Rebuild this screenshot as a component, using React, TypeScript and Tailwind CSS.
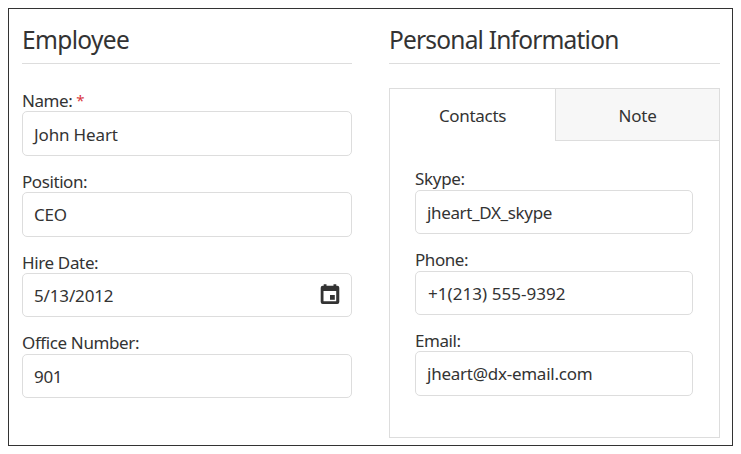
type FieldProps = {
  label: string;
  value: string;
  labelClass: string;
  valueClass: string;
  boxClass: string;
  required?: boolean;
  calendar?: boolean;
};

function CalendarIcon() {
  return (
    <svg className="mr-[11px] mb-0.5 ml-auto h-5 w-5 text-[#333]" viewBox="0 0 20 20" fill="currentColor">
      <path
        fillRule="evenodd"
        d="M3.700 0.300h2.800v1.500h7V0.300h2.800v1.500h1a2 2 0 0 1 2 2V18a2 2 0 0 1-2 2H2.700a2 2 0 0 1-2-2V3.800a2 2 0 0 1 2-2h1zM3.500 7v10.300h12.700V7z"
      />
      <path d="M10 11h4.800v4.800H10z" />
    </svg>
  );
}

function Field({ label, value, labelClass, valueClass, boxClass, required, calendar }: FieldProps) {
  return (
    <div className="flex flex-col text-[17px] leading-[22px]">
      <label className={`flex h-[22px] items-center whitespace-nowrap ${labelClass}`}>
        {label}
        {required && <span className="ml-1 pb-[3px] text-[15px] text-[#d9363e]">*</span>}
      </label>
      <div className={`flex items-center rounded-[5px] border border-[#ddd] pl-[11px] ${boxClass}`}>
        <span className={`whitespace-nowrap ${valueClass}`}>{value}</span>
        {calendar && <CalendarIcon />}
      </div>
    </div>
  );
}

export default function App() {
  return (
    <div className="h-[454px] w-[741px] bg-white p-2 font-['Noto_Sans',sans-serif] text-[#333]">
      <div className="flex h-[438px] w-[725px] gap-[37px] border border-[#333] pl-[13px]">
        <section className="flex w-[330px] flex-col">
          <h2 className="flex h-[55px] items-center border-b border-[#ddd] pt-[9px] text-[24.5px] tracking-[-0.65px]">Employee</h2>
          <div className="flex flex-col pt-[25px]">
            <Field label="Name:" value="John Heart" labelClass="pt-[2px] tracking-[-0.45px]" valueClass="pt-[2px] tracking-[-0.15px]" boxClass="h-[45px]" required />
            <div className="h-[14px]" />
            <Field label="Position:" value="CEO" labelClass="pt-[2px] tracking-[-0.42px]" valueClass="tracking-[-0.2px]" boxClass="h-[45px]" />
            <div className="h-[14px]" />
            <Field label="Hire Date:" value="5/13/2012" labelClass="pt-[2px] tracking-[-0.36px]" valueClass="pt-[2px] tracking-[-0.15px]" boxClass="h-[44px]" calendar />
            <div className="h-[15px]" />
            <Field label="Office Number:" value="901" labelClass="tracking-[-0.38px]" valueClass="pt-[2px] tracking-[-0.3px]" boxClass="h-[44px]" />
          </div>
        </section>

        <section className="flex w-[331px] flex-col">
          <h2 className="flex h-[55px] items-center border-b border-[#ddd] pt-[9px] text-[24.5px] tracking-[-0.8px]">Personal Information</h2>
          <div className="mt-6 flex h-[350px] flex-col border border-[#ddd]">
            <div className="flex h-[52px] text-[17px]">
              <div className="flex w-[165px] items-center justify-center pt-[2px] tracking-[-0.3px]">Contacts</div>
              <div className="flex flex-1 items-center justify-center border-b border-l border-[#ddd] bg-[#f7f7f7] pt-[2px] tracking-[-0.2px]">Note</div>
            </div>
            <div className="flex flex-col px-[25px] pt-[27px]">
              <div className="w-[278px]">
                <Field label="Skype:" value="jheart_DX_skype" labelClass="tracking-[-0.3px]" valueClass="pt-[2px] tracking-[-0.35px]" boxClass="h-[44px]" />
                <div className="h-[15px]" />
                <Field label="Phone:" value="+1(213) 555-9392" labelClass="tracking-[-0.45px]" valueClass="pt-[2px] pl-px tracking-[0.05px]" boxClass="h-[44px]" />
                <div className="h-[14px]" />
                <Field label="Email:" value="jheart@dx-email.com" labelClass="pt-[2px] tracking-[-0.45px]" valueClass="tracking-[-0.25px]" boxClass="h-[45px]" />
              </div>
            </div>
          </div>
        </section>
      </div>
    </div>
  );
}
